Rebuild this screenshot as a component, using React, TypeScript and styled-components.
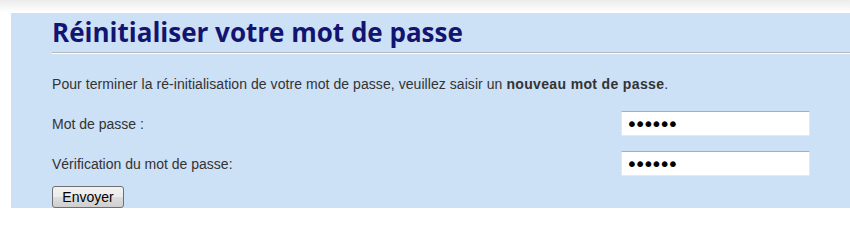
import React from "react";
import styled, { createGlobalStyle } from "styled-components";

const GlobalStyle = createGlobalStyle`
  html, body {
    margin: 0;
    padding: 0;
    background: #ffffff;
  }
  body {
    font-family: "Liberation Sans", Arial, sans-serif;
  }
`;

const TopBand = styled.div`
  height: 13px;
  background: linear-gradient(to bottom, #ececec 0%, #f8f8f8 60%, #ffffff 100%);
`;

const Panel = styled.div`
  margin-left: 11px;
  height: 195px;
  box-sizing: border-box;
  background: #cce0f6;
  padding: 0 0 0 41px;
  display: flex;
  flex-direction: column;
`;

const Title = styled.h1`
  margin: 0;
  padding-top: 1px;
  height: 38px;
  font-family: "Open Sans", "DejaVu Sans", sans-serif;
  font-size: 26px;
  font-weight: 700;
  line-height: 36px;
  color: #131370;
  border-bottom: 1px solid #b4b8bd;
  box-shadow: 0 1px 0 #ffffff;
`;

const Intro = styled.p`
  margin: 23px 0 0;
  font-size: 14px;
  line-height: 16px;
  color: #333333;
  letter-spacing: 0.06px;

  strong {
    font-weight: 700;
    letter-spacing: 0.35px;
  }
`;

const Form = styled.form`
  display: flex;
  flex-direction: column;
  margin-top: 19px;
`;

const Row = styled.div`
  display: flex;
  align-items: center;
  justify-content: space-between;
  padding-right: 40px;
  height: 25px;
  margin-bottom: 15px;
`;

const Label = styled.label`
  font-size: 14px;
  color: #333333;
`;

const Field = styled.input`
  width: 189px;
  height: 25px;
  box-sizing: border-box;
  border: 1px solid #e3e9ef;
  border-top-color: #abadb3;
  background: #ffffff;
  padding: 0 4px;
  font-family: "DejaVu Sans", sans-serif;
  font-size: 20px;
  letter-spacing: -3.6px;
  color: #000000;
  outline: none;
`;

const SubmitButton = styled.button`
  align-self: flex-start;
  margin-top: -5px;
  width: 72px;
  height: 22px;
  padding: 0;
  box-sizing: border-box;
  border: 1px solid #707070;
  border-radius: 3px;
  background: linear-gradient(to bottom, #f2f2f2 0%, #ebebeb 50%, #dddddd 51%, #cfcfcf 100%);
  font-family: "Liberation Sans", Arial, sans-serif;
  font-size: 14px;
  color: #000000;
`;

export default function App() {
  return (
    <>
      <GlobalStyle />
      <TopBand />
      <Panel>
        <Title>Réinitialiser votre mot de passe</Title>
        <Intro>
          Pour terminer la ré-initialisation de votre mot de passe, veuillez
          saisir un <strong>nouveau mot de passe</strong>.
        </Intro>
        <Form onSubmit={(e) => e.preventDefault()}>
          <Row>
            <Label htmlFor="pwd">Mot de passe :</Label>
            <Field id="pwd" type="password" defaultValue="secret" />
          </Row>
          <Row>
            <Label htmlFor="pwd2">Vérification du mot de passe:</Label>
            <Field id="pwd2" type="password" defaultValue="secret" />
          </Row>
          <SubmitButton type="submit">Envoyer</SubmitButton>
        </Form>
      </Panel>
    </>
  );
}
